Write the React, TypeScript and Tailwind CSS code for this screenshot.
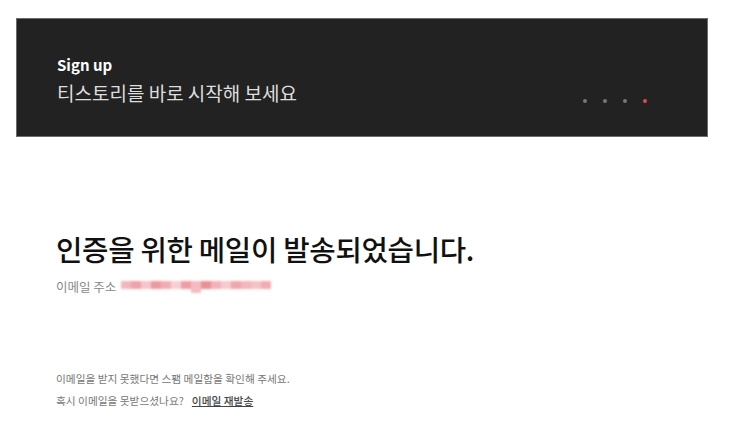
const font = { fontFamily: '"Noto Sans CJK KR", "Noto Sans", sans-serif' };

// 흐리게 처리된 이메일 주소 (모자이크)
const blurBlocks = [
  '#f2b8bd', '#eea3aa', '#f5c6ca', '#ec9aa2', '#f0aeb4', '#f7d0d3', '#ee9ea6', '#f3bcc1',
  '#e98f98', '#f1b3b9', '#f6cbce', '#efa7ad', '#f2b6bb', '#f4c2c6', '#f0acb2',
];

function BlurredEmail() {
  return (
    <span className="inline-flex items-start h-[12px] ml-[5px] blur-[1px]">
      {blurBlocks.map((c, i) => (
        <span
          key={i}
          className={i === 7 ? 'w-[10px] h-[12px]' : 'w-[10px] h-[8px]'}
          style={{ backgroundColor: c }}
        />
      ))}
    </span>
  );
}

export default function App() {
  return (
    <div className="w-[740px] h-[444px] bg-white" style={font}>
      <div className="pt-[18px] px-[16px]">
        {/* 상단 배너 */}
        <div className="w-[692px] h-[119px] bg-[#222222] border border-[#6b6b6b] flex items-end justify-between pl-[40px] pr-[60px] pb-[30px]">
          <div>
            <p className="text-[15px] font-bold text-white leading-[18px]">Sign up</p>
            <p className="text-[19px] text-[#dedede] leading-[26px] mt-[6px]">티스토리를 바로 시작해 보세요</p>
          </div>
          <div className="flex gap-[16px] mb-[3px]">
            <span className="w-[4px] h-[4px] rounded-full bg-[#777]" />
            <span className="w-[4px] h-[4px] rounded-full bg-[#777]" />
            <span className="w-[4px] h-[4px] rounded-full bg-[#777]" />
            <span className="w-[4px] h-[4px] rounded-full bg-[#e8464c]" />
          </div>
        </div>
      </div>

      <main className="pl-[56px] pt-[93px]">
        <h1 className="text-[28.7px] font-medium text-[#111] leading-[38px] tracking-[-0.3px]">
          인증을 위한 메일이 발송되었습니다.
        </h1>
        <p className="mt-[10px] text-[12.5px] text-[#888] leading-[18px] flex items-center">
          이메일 주소 <BlurredEmail />
        </p>

        <div className="mt-[76px] text-[10.7px] text-[#777] leading-[14px] space-y-[8px]">
          <p>이메일을 받지 못했다면 스팸 메일함을 확인해 주세요.</p>
          <p>
            혹시 이메일을 못받으셨나요?
            <a href="#" className="ml-[8px] text-[#444] font-medium underline">이메일 재발송</a>
          </p>
        </div>
      </main>
    </div>
  );
}
